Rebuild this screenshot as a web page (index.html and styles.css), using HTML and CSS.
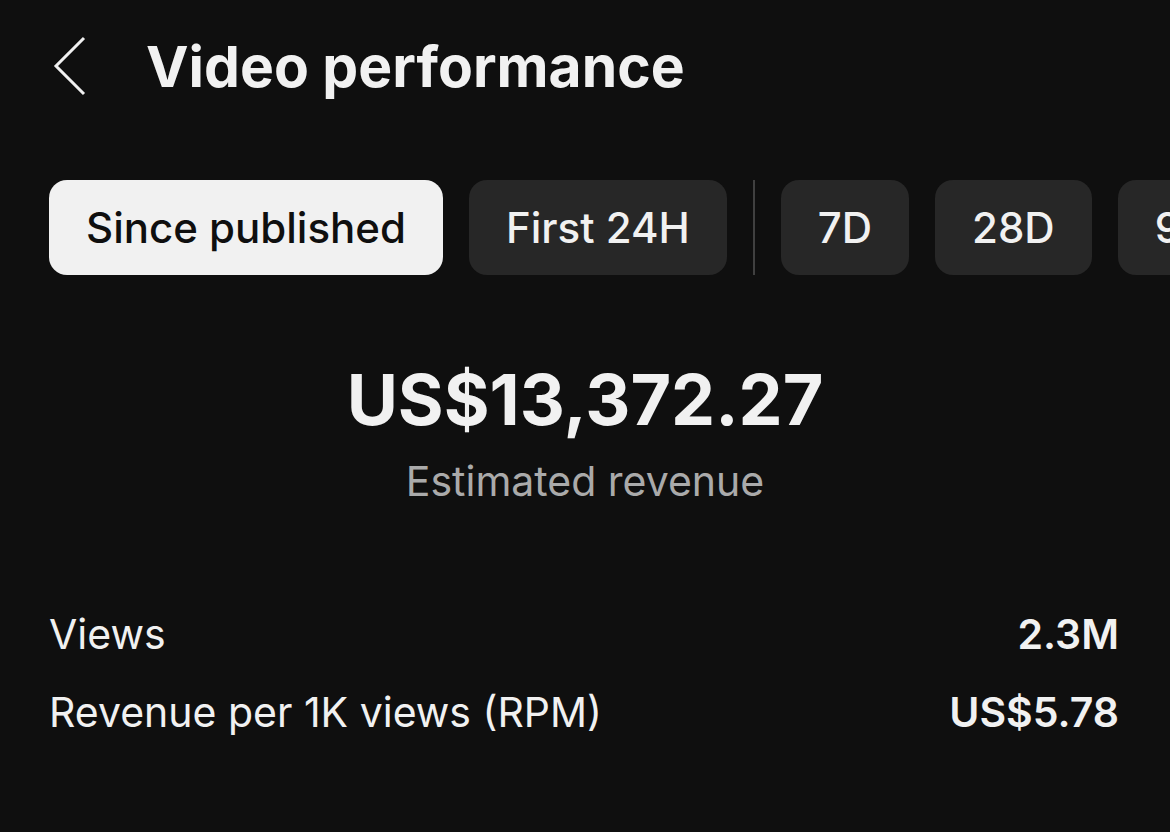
FILE: index.html
```html
<!DOCTYPE html>
<html lang="en">
<head>
  <meta charset="UTF-8">
  <title>Video performance</title>
  <link rel="stylesheet" href="styles.css">
</head>
<body>
  <header class="top">
    <svg class="back" width="36" height="60" viewBox="0 0 36 60">
      <path d="M32 2 L4 30 L32 58" fill="none" stroke="#f1f1f1" stroke-width="3"/>
    </svg>
    <h1>Video performance</h1>
  </header>

  <div class="chips">
    <span class="chip active">Since published</span>
    <span class="chip">First 24H</span>
    <span class="divider"></span>
    <span class="chip">7D</span>
    <span class="chip">28D</span>
    <span class="chip">90D</span>
  </div>

  <div class="total">
    <div class="amount">US$13,372.27</div>
    <div class="label">Estimated revenue</div>
  </div>

  <div class="stats">
    <div class="row"><span>Views</span><b>2.3M</b></div>
    <div class="row"><span>Revenue per 1K views (RPM)</span><b>US$5.78</b></div>
  </div>
</body>
</html>
```

FILE: styles.css
```css
html, body {
  margin: 0;
  background: #0f0f0f;
}
body {
  font-family: Inter, Roboto, "Liberation Sans", sans-serif;
  color: #f1f1f1;
  width: 1170px;
  height: 832px;
  overflow: hidden;
}
.top {
  display: flex;
  align-items: center;
  padding: 36px 0 0 52px;
  height: 60px;
}
.back {
  display: block;
}
h1 {
  margin: 0 0 0 58px;
  font-size: 57px;
  font-weight: 700;
}
.chips {
  display: flex;
  align-items: stretch;
  gap: 26px;
  margin: 84px 0 0 49px;
  height: 95px;
  white-space: nowrap;
  overflow: hidden;
}
.chip {
  display: flex;
  align-items: center;
  flex-shrink: 0;
  padding: 0 37px;
  background: #272727;
  border-radius: 18px;
  font-size: 42px;
  font-weight: 500;
  color: #f1f1f1;
}
.chip.active {
  background: #f1f1f1;
  color: #0f0f0f;
}
.divider {
  flex-shrink: 0;
  width: 2px;
  background: #404040;
}
.total {
  text-align: center;
  margin-top: 80px;
}
.amount {
  font-size: 70px;
  font-weight: 700;
  line-height: 90px;
}
.label {
  font-size: 41px;
  color: #aaaaaa;
  line-height: 56px;
  margin-top: 8px;
}
.stats {
  margin: 86px 51px 0 49px;
}
.row {
  display: flex;
  justify-content: space-between;
  font-size: 41px;
  line-height: 78px;
}
.row b {
  font-weight: 600;
}
```
